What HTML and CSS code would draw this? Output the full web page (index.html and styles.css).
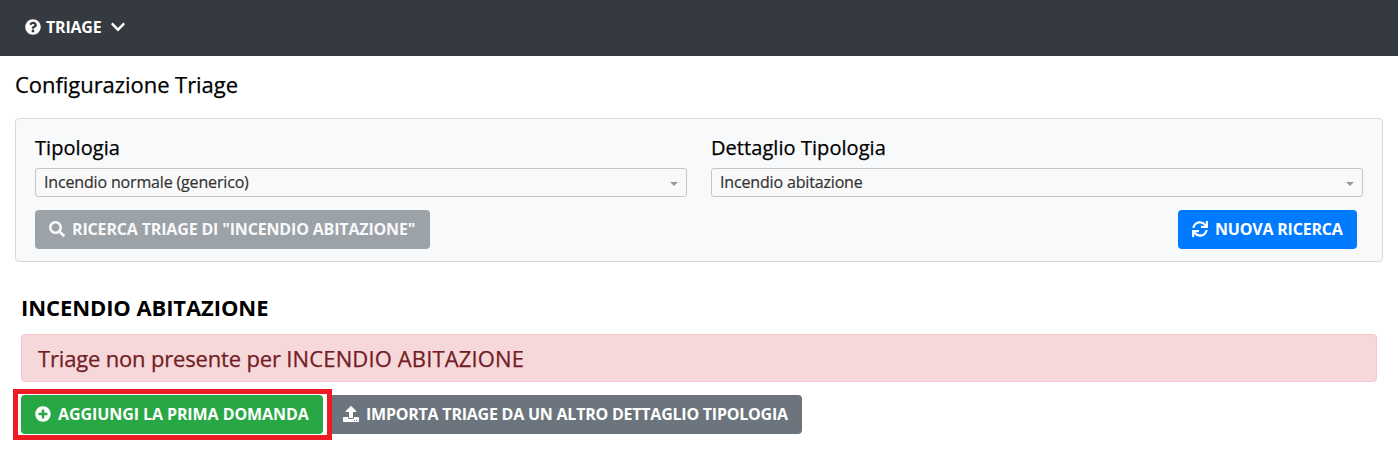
FILE: index.html
```html
<!DOCTYPE html>
<html lang="it">
<head>
<meta charset="utf-8">
<title>Configurazione Triage</title>
<link rel="stylesheet" href="styles.css">
</head>
<body>
<nav class="navbar">
  <a class="nav-item">
    <svg class="icon" viewBox="0 0 512 512"><path d="M504 256c0 136.997-111.043 248-248 248S8 392.997 8 256C8 119.083 119.043 8 256 8s248 111.083 248 248zM262.655 90c-54.497 0-89.255 22.957-116.549 63.758-3.536 5.286-2.353 12.415 2.715 16.258l34.699 26.31c5.205 3.947 12.621 3.008 16.665-2.122 17.864-22.658 30.113-35.797 57.303-35.797 20.429 0 45.698 13.148 45.698 32.958 0 14.976-12.363 22.667-32.534 33.976C247.128 238.528 216 254.941 216 296v4c0 6.627 5.373 12 12 12h56c6.627 0 12-5.373 12-12v-1.333c0-28.462 83.186-29.647 83.186-106.667 0-58.002-60.165-102-116.531-102zM256 338c-25.365 0-46 20.635-46 46 0 25.364 20.635 46 46 46s46-20.636 46-46c0-25.365-20.635-46-46-46z"/></svg>
    <span class="nav-label">TRIAGE</span>
    <svg class="chevron" viewBox="0 0 448 512"><path d="M207.029 381.476L12.686 187.132c-9.373-9.373-9.373-24.569 0-33.941l22.667-22.667c9.357-9.357 24.522-9.375 33.901-.04L224 284.505l154.745-154.021c9.379-9.335 24.544-9.317 33.901.04l22.667 22.667c9.373 9.373 9.373 24.569 0 33.941L240.971 381.476c-9.373 9.372-24.569 9.372-33.942 0z"/></svg>
  </a>
</nav>
<main class="page">
  <h1 class="title">Configurazione Triage</h1>
  <section class="card">
    <div class="fields">
      <div class="field">
        <label class="label">Tipologia</label>
        <div class="select"><span class="value">Incendio normale (generico)</span><i class="caret"></i></div>
      </div>
      <div class="field">
        <label class="label">Dettaglio Tipologia</label>
        <div class="select"><span class="value">Incendio abitazione</span><i class="caret"></i></div>
      </div>
    </div>
    <div class="card-actions">
      <button class="btn btn-search">
        <svg class="icon" viewBox="0 0 512 512"><path d="M505 442.7L405.3 343c-4.5-4.5-10.6-7-17-7H372c27.6-35.3 44-79.7 44-128C416 93.1 322.9 0 208 0S0 93.1 0 208s93.1 208 208 208c48.3 0 92.7-16.4 128-44v16.3c0 6.4 2.5 12.5 7 17l99.7 99.7c9.4 9.4 24.6 9.4 33.9 0l28.3-28.3c9.4-9.4 9.4-24.6.1-34zM208 336c-70.7 0-128-57.2-128-128 0-70.7 57.2-128 128-128 70.7 0 128 57.2 128 128 0 70.7-57.2 128-128 128z"/></svg>
        <span>RICERCA TRIAGE DI "INCENDIO ABITAZIONE"</span>
      </button>
      <button class="btn btn-new">
        <svg class="icon" viewBox="0 0 512 512"><path d="M440.65 12.57l4 82.77A247.16 247.16 0 0 0 255.83 8C134.73 8 33.91 94.92 12.29 209.82A12 12 0 0 0 24.09 224h49.05a12 12 0 0 0 11.67-9.26 175.91 175.91 0 0 1 317-56.94l-101.46-4.86a12 12 0 0 0-12.57 12v47.41a12 12 0 0 0 12 12H500a12 12 0 0 0 12-12V12a12 12 0 0 0-12-12h-47.37a12 12 0 0 0-11.98 12.57zM255.83 432a175.61 175.61 0 0 1-146-77.8l101.8 4.87a12 12 0 0 0 12.57-12v-47.4a12 12 0 0 0-12-12H12a12 12 0 0 0-12 12V500a12 12 0 0 0 12 12h47.35a12 12 0 0 0 12-12.6l-4.15-82.57A247.17 247.17 0 0 0 255.83 504c121.11 0 221.93-86.92 243.55-201.82a12 12 0 0 0-11.8-14.18h-49.05a12 12 0 0 0-11.67 9.26A175.86 175.86 0 0 1 255.83 432z"/></svg>
        <span>NUOVA RICERCA</span>
      </button>
    </div>
  </section>
  <section class="result">
    <h2 class="subtitle">INCENDIO ABITAZIONE</h2>
    <div class="alert">Triage non presente per <span class="alert-name">INCENDIO ABITAZIONE</span></div>
    <div class="result-actions">
      <button class="btn btn-add">
        <svg class="icon" viewBox="0 0 512 512"><path d="M256 8C119 8 8 119 8 256s111 248 248 248 248-111 248-248S393 8 256 8zm144 276c0 6.6-5.4 12-12 12h-92v92c0 6.6-5.4 12-12 12h-56c-6.6 0-12-5.4-12-12v-92h-92c-6.6 0-12-5.4-12-12v-56c0-6.6 5.4-12 12-12h92v-92c0-6.6 5.4-12 12-12h56c6.6 0 12 5.4 12 12v92h92c6.6 0 12 5.4 12 12v56z"/></svg>
        <span>AGGIUNGI LA PRIMA DOMANDA</span>
      </button>
      <button class="btn btn-import">
        <svg class="icon" viewBox="0 0 512 512"><path d="M296 384h-80c-13.3 0-24-10.7-24-24V192h-87.7c-17.8 0-26.7-21.5-14.1-34.1L242.3 5.7c7.5-7.5 19.8-7.5 27.3 0l152.2 152.2c12.6 12.6 3.7 34.1-14.1 34.1H320v168c0 13.3-10.7 24-24 24zm216-8v112c0 13.3-10.7 24-24 24H24c-13.3 0-24-10.7-24-24V376c0-13.3 10.7-24 24-24h136v8c0 30.9 25.1 56 56 56h80c30.9 0 56-25.1 56-56v-8h136c13.3 0 24 10.7 24 24zm-124 88c0-11-9-20-20-20s-20 9-20 20 9 20 20 20 20-9 20-20zm64 0c0-11-9-20-20-20s-20 9-20 20 9 20 20 20 20-9 20-20z"/></svg>
        <span>IMPORTA TRIAGE DA UN ALTRO DETTAGLIO TIPOLOGIA</span>
      </button>
      <div class="highlight"></div>
    </div>
  </section>
</main>
</body>
</html>
```
FILE: styles.css
```css
* { box-sizing: border-box; }
body {
  margin: 0;
  height: 449px;
  overflow: hidden;
  background: #fff;
  color: #000;
  font-family: "Open Sans", "Noto Sans", sans-serif;
  font-size: 16px;
  white-space: nowrap;
}
h1, h2 { margin: 0; }
.icon { width: 16px; height: 16px; fill: currentColor; flex: none; }
.navbar {
  height: 56px;
  padding-left: 25px;
  display: flex;
  align-items: center;
  background: #343a40;
  color: #fff;
}
.nav-item { display: flex; align-items: center; height: 24px; margin-top: -2px; }
.nav-label { margin-left: 5px; width: 56px; font-weight: 700; font-size: 16px; letter-spacing: -0.2px; }
.chevron { width: 14px; height: 16px; margin-left: 9px; fill: currentColor; }
.page { padding: 0 15px; }
.title { height: 62px; padding-top: 13px; font-size: 22px; line-height: 30px; font-weight: 500; letter-spacing: -0.05px; -webkit-text-stroke: 0.25px; }
.card {
  height: 144px;
  padding: 15px 19px 0;
  border: 1px solid #d7d9db;
  border-radius: 4px;
  background: #f8f9fa;
}
.fields { display: grid; grid-template-columns: 1fr 1fr; gap: 24px; }
.label { display: block; height: 34px; font-size: 20px; line-height: 28px; font-weight: 500; letter-spacing: 0.06px; -webkit-text-stroke: 0.25px; }
.select {
  height: 29px;
  padding: 0 8px;
  display: flex;
  align-items: center;
  justify-content: space-between;
  border: 1px solid #c4c6c8;
  border-radius: 3px;
  background: #f9f9f9;
  color: #333;
}
.value { font-size: 16px; line-height: 26px; margin-top: -1px; letter-spacing: -0.16px; -webkit-text-stroke: 0.2px; }
.caret { border: 4px solid transparent; border-top-color: #999; border-bottom: 0; margin-top: 3px; }
.card-actions { margin-top: 13px; padding-right: 6px; display: flex; justify-content: space-between; }
.btn {
  height: 39px;
  padding: 0 0 1px 14px;
  display: flex;
  align-items: center;
  gap: 7px;
  border: 0;
  border-radius: 4px;
  color: #fff;
  font: 700 16px/24px "Open Sans", "Noto Sans", sans-serif;
  white-space: nowrap;
}
.btn-search { width: 395px; background: #9ba2a8; color: #f9f9fa; letter-spacing: -0.16px; }
.btn-new { width: 179px; background: #007bff; letter-spacing: -0.2px; }
.btn-add { width: 302px; background: #28a745; letter-spacing: -0.08px; }
.btn-import { width: 473px; background: #6c757d; letter-spacing: -0.23px; }
.result { padding: 28px 6px 0; }
.subtitle { height: 44px; font-size: 22px; line-height: 34px; font-weight: 700; letter-spacing: -0.09px; }
.alert {
  height: 48px;
  padding: 0 16px;
  border: 1px solid #f5c6cb;
  border-radius: 4px;
  background: #f6d7da;
  color: #721c24;
  font-size: 22px;
  line-height: 46px;
  font-weight: 500;
  letter-spacing: -0.17px;
  -webkit-text-stroke: 0.25px;
}
.alert-name { letter-spacing: 0.13px; }
.result-actions { position: relative; margin-top: 13px; display: flex; gap: 6px; }
/* Callout frame over the primary action */
.highlight { position: absolute; left: -8px; top: -6px; width: 319px; height: 51px; border: 5px solid #ed1c24; }
```
